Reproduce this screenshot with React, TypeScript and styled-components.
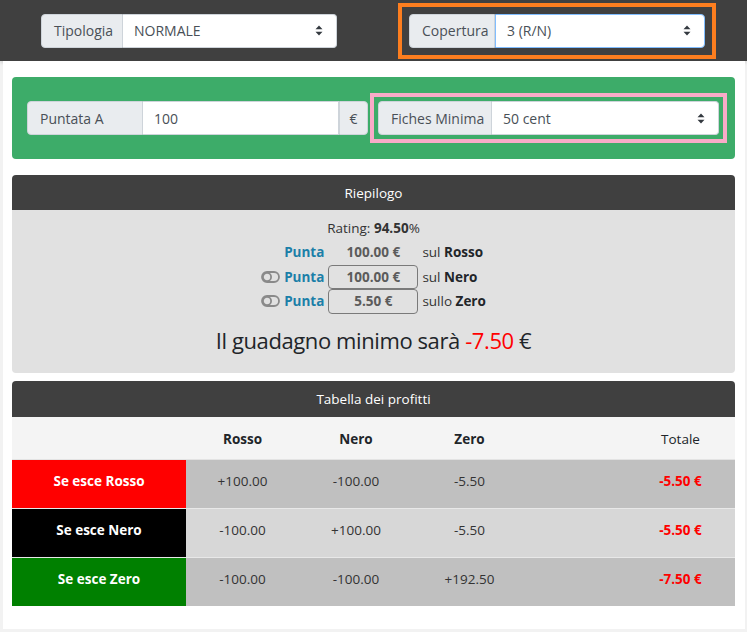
import React from "react";
import styled, { createGlobalStyle } from "styled-components";

const Global = createGlobalStyle`
  html, body { margin: 0; padding: 0; }
  body {
    background: #f2f2f2;
    font-family: "Open Sans", "Noto Sans", sans-serif;
    font-size: 14px;
    color: #212529;
  }
`;

const Page = styled.div`
  width: 747px;
  min-height: 632px;
`;

const TopBar = styled.div`
  height: 61px;
  background: #404040;
  display: flex;
  align-items: center;
  padding-left: 41px;
  gap: 61px;
  box-shadow: 0 2px 3px rgba(0, 0, 0, 0.12);
`;

const Highlight = styled.div<{ $color: string; $pad: number }>`
  border: 4px solid ${(p) => p.$color};
  padding: ${(p) => p.$pad}px;
  display: flex;
`;

const Group = styled.div<{ $w?: number; $flex?: boolean }>`
  display: flex;
  height: 34px;
  width: ${(p) => (p.$w ? `${p.$w}px` : "auto")};
  flex: ${(p) => (p.$flex ? "1" : "none")};
  font-size: 14px;
`;

const Addon = styled.div<{ $w: number; $side: "left" | "right" }>`
  width: ${(p) => p.$w}px;
  box-sizing: border-box;
  background: #e9ecef;
  border: 1px solid #ced4da;
  border-radius: ${(p) => (p.$side === "left" ? "4px 0 0 4px" : "0 4px 4px 0")};
  color: #495057;
  display: flex;
  align-items: center;
  justify-content: ${(p) => (p.$side === "left" ? "flex-start" : "center")};
  padding-left: ${(p) => (p.$side === "left" ? "12px" : "0")};
`;

const Field = styled.div<{ $focus?: boolean; $round?: boolean }>`
  flex: 1;
  box-sizing: border-box;
  background: #fff;
  border: 1px solid ${(p) => (p.$focus ? "#80bdff" : "#ced4da")};
  border-left: ${(p) => (p.$focus ? "1px solid #80bdff" : "none")};
  border-radius: ${(p) => (p.$round ? "0 4px 4px 0" : "0")};
  color: #495057;
  display: flex;
  align-items: center;
  justify-content: space-between;
  padding: 0 13px 0 11px;
`;

const Arrows = () => (
  <svg width="8" height="11" viewBox="0 0 8 11">
    <path d="M4 0.5 L7.5 4.2 H0.5 Z M4 10.5 L7.5 6.8 H0.5 Z" fill="#343a40" />
  </svg>
);

const Content = styled.div`
  margin-left: 3px;
  width: 742px;
  box-sizing: border-box;
  background: #fff;
  padding: 16px 10px 23px 9px;
`;

const GreenBox = styled.div`
  background: #3dac69;
  border-radius: 4px;
  height: 82px;
  display: flex;
  align-items: center;
  padding: 0 8px 0 15px;
  gap: 2px;
`;

const Panel = styled.div<{ $mt: number }>`
  margin-top: ${(p) => p.$mt}px;
`;

const PanelHead = styled.div<{ $h: number }>`
  background: #404040;
  color: #fff;
  height: ${(p) => p.$h}px;
  border-radius: 4px 4px 0 0;
  display: flex;
  align-items: center;
  justify-content: center;
  font-size: 13.5px;
`;

const SummaryBody = styled.div`
  background: #e1e1e1;
  border-radius: 0 0 4px 4px;
  height: 163px;
  box-sizing: border-box;
  padding-top: 8px;
  display: flex;
  flex-direction: column;
  align-items: center;
`;

const Rating = styled.div`
  font-size: 13.5px;
  color: #333;
  height: 20px;
  line-height: 20px;
`;

const BetGrid = styled.div`
  display: grid;
  grid-template-columns: auto 90px auto;
  column-gap: 4px;
  align-items: center;
  margin-top: 2px;
`;

const BetLabel = styled.div`
  display: flex;
  align-items: center;
  justify-content: flex-end;
  gap: 4px;
  height: 24.5px;
  font-weight: 700;
  color: #1b7fa8;
  font-size: 13.5px;
`;

const Value = styled.div<{ $boxed?: boolean }>`
  height: 24.5px;
  box-sizing: border-box;
  border: 1px solid ${(p) => (p.$boxed ? "#7a7a7a" : "transparent")};
  border-radius: 4px;
  display: flex;
  align-items: center;
  justify-content: center;
  font-weight: 700;
  color: #5b5b5b;
  font-size: 13.5px;
`;

const Target = styled.div`
  font-size: 13.5px;
  color: #333;
  b {
    color: #212529;
  }
`;

const MinGain = styled.div`
  margin-top: 11px;
  font-size: 22px;
  letter-spacing: -0.4px;
  color: #212529;
  span {
    color: #ff0000;
  }
`;

const Table = styled.table`
  width: 100%;
  border-collapse: collapse;
  table-layout: fixed;
  font-size: 13.5px;
`;

const HeadRow = styled.tr`
  background: #f4f4f4;
  height: 42px;
  border-bottom: 1px solid #e3e3e3;
`;

const Th = styled.th<{ $bold?: boolean }>`
  font-weight: ${(p) => (p.$bold ? 700 : 400)};
  color: #212529;
  text-align: center;
  padding: 0 0 0 0;
  padding-top: 2px;
`;

const Row = styled.tr<{ $bg: string }>`
  background: ${(p) => p.$bg};
  height: 49px;
  border-top: 1px solid #e8e8e8;
`;

const RowHead = styled.td<{ $bg: string }>`
  background: ${(p) => p.$bg};
  color: #fff;
  font-weight: 700;
  text-align: center;
  padding: 0 0 5px 0;
`;

const Td = styled.td`
  text-align: center;
  color: #333;
  padding: 0 0 5px 0;
`;

const Total = styled.td`
  text-align: center;
  color: #ff0000;
  font-weight: 700;
  padding: 0 0 5px 0;
`;

const Toggle = () => (
  <svg width="19" height="12" viewBox="0 0 19 12">
    <rect x="1" y="1" width="17" height="10" rx="5" fill="none" stroke="#8a8a8a" strokeWidth="1.8" />
    <circle cx="6" cy="6" r="4.1" fill="none" stroke="#8a8a8a" strokeWidth="1.8" />
  </svg>
);

const rows = [
  { name: "Se esce Rosso", color: "#ff0000", bg: "#c0c0c0", v: ["+100.00", "-100.00", "-5.50"], t: "-5.50 €" },
  { name: "Se esce Nero", color: "#000000", bg: "#d7d7d7", v: ["-100.00", "+100.00", "-5.50"], t: "-5.50 €" },
  { name: "Se esce Zero", color: "#008000", bg: "#c0c0c0", v: ["-100.00", "-100.00", "+192.50"], t: "-7.50 €" },
];

export default function App() {
  return (
    <Page>
      <Global />
      <TopBar>
        <Group $w={296}>
          <Addon $w={82} $side="left">Tipologia</Addon>
          <Field $round>
            NORMALE <Arrows />
          </Field>
        </Group>
        <Highlight $color="#fd7e1f" $pad={7}>
          <Group $w={296}>
            <Addon $w={86} $side="left">Copertura</Addon>
            <Field $round $focus>
              3 (R/N) <Arrows />
            </Field>
          </Group>
        </Highlight>
      </TopBar>
      <Content>
        <GreenBox>
          <Group $w={341}>
            <Addon $w={116} $side="left">Puntata A</Addon>
            <Field>100</Field>
            <Addon $w={29} $side="right">€</Addon>
          </Group>
          <Highlight $color="#f9abc8" $pad={4} style={{ flex: 1 }}>
            <Group $flex>
              <Addon $w={114} $side="left">Fiches Minima</Addon>
              <Field $round>
                50 cent <Arrows />
              </Field>
            </Group>
          </Highlight>
        </GreenBox>

        <Panel $mt={16}>
          <PanelHead $h={35}>Riepilogo</PanelHead>
          <SummaryBody>
            <Rating>
              Rating: <b>94.50</b>%
            </Rating>
            <BetGrid>
              <BetLabel>Punta</BetLabel>
              <Value>100.00 €</Value>
              <Target>
                sul <b>Rosso</b>
              </Target>
              <BetLabel>
                <Toggle />
                Punta
              </BetLabel>
              <Value $boxed>100.00 €</Value>
              <Target>
                sul <b>Nero</b>
              </Target>
              <BetLabel>
                <Toggle />
                Punta
              </BetLabel>
              <Value $boxed>5.50 €</Value>
              <Target>
                sullo <b>Zero</b>
              </Target>
            </BetGrid>
            <MinGain>
              Il guadagno minimo sarà <span>-7.50</span> €
            </MinGain>
          </SummaryBody>
        </Panel>

        <Panel $mt={8}>
          <PanelHead $h={36}>Tabella dei profitti</PanelHead>
          <Table>
            <colgroup>
              <col style={{ width: 174 }} />
              <col style={{ width: 113 }} />
              <col style={{ width: 114 }} />
              <col style={{ width: 113 }} />
              <col style={{ width: 100 }} />
              <col style={{ width: 109 }} />
            </colgroup>
            <thead>
              <HeadRow>
                <Th />
                <Th $bold>Rosso</Th>
                <Th $bold>Nero</Th>
                <Th $bold>Zero</Th>
                <Th />
                <Th>Totale</Th>
              </HeadRow>
            </thead>
            <tbody>
              {rows.map((r) => (
                <Row key={r.name} $bg={r.bg}>
                  <RowHead $bg={r.color}>{r.name}</RowHead>
                  {r.v.map((x, i) => (
                    <Td key={i}>{x}</Td>
                  ))}
                  <Td />
                  <Total>{r.t}</Total>
                </Row>
              ))}
            </tbody>
          </Table>
        </Panel>
      </Content>
    </Page>
  );
}
